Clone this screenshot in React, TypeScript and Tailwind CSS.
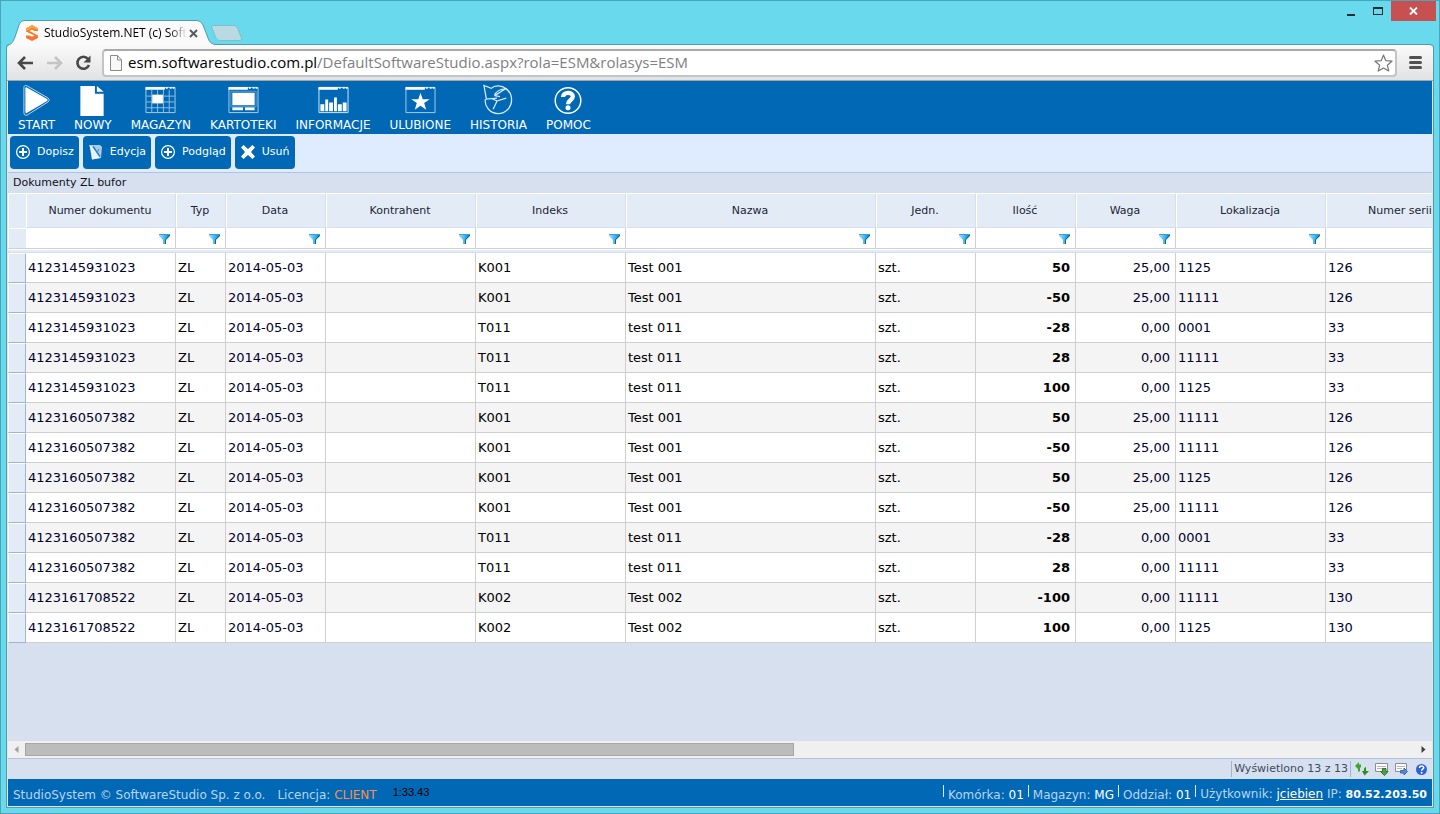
import type { ReactNode } from "react";

const columns = [
  { key: "numer", label: "Numer dokumentu", width: "w-[150px]" },
  { key: "typ", label: "Typ", width: "w-[50px]" },
  { key: "data", label: "Data", width: "w-[100px]" },
  { key: "kontrahent", label: "Kontrahent", width: "w-[150px]" },
  { key: "indeks", label: "Indeks", width: "w-[150px]" },
  { key: "nazwa", label: "Nazwa", width: "w-[250px]" },
  { key: "jedn", label: "Jedn.", width: "w-[100px]" },
  { key: "ilosc", label: "Ilość", width: "w-[100px]" },
  { key: "waga", label: "Waga", width: "w-[100px]" },
  { key: "lokalizacja", label: "Lokalizacja", width: "w-[150px]" },
  { key: "seria", label: "Numer serii", width: "w-[150px]" },
];

// numer, indeks, nazwa, ilosc, waga, lokalizacja, seria
const documents = [
  ["4123145931023", "K001", "Test 001", "50", "25,00", "1125", "126"],
  ["4123145931023", "K001", "Test 001", "-50", "25,00", "11111", "126"],
  ["4123145931023", "T011", "test 011", "-28", "0,00", "0001", "33"],
  ["4123145931023", "T011", "test 011", "28", "0,00", "11111", "33"],
  ["4123145931023", "T011", "test 011", "100", "0,00", "1125", "33"],
  ["4123160507382", "K001", "Test 001", "50", "25,00", "11111", "126"],
  ["4123160507382", "K001", "Test 001", "-50", "25,00", "11111", "126"],
  ["4123160507382", "K001", "Test 001", "50", "25,00", "1125", "126"],
  ["4123160507382", "K001", "Test 001", "-50", "25,00", "11111", "126"],
  ["4123160507382", "T011", "test 011", "-28", "0,00", "0001", "33"],
  ["4123160507382", "T011", "test 011", "28", "0,00", "11111", "33"],
  ["4123161708522", "K002", "Test 002", "-100", "0,00", "11111", "130"],
  ["4123161708522", "K002", "Test 002", "100", "0,00", "1125", "130"],
];

const menu: { label: string; icon: ReactNode }[] = [
  {
    label: "START",
    icon: (
      <>
        <path d="M3.500 4Q3.500 0.500 7 2L28.500 14.500Q31 16.500 28.500 18.500L7 32Q3.500 33 3.500 29.500Z" fill="none" stroke="#bcd8ee" />
        <path d="M5 4.500Q5 3 6.500 3.500L27.500 15.500Q28.500 16.500 27.500 17.500L6.500 30Q5 30.500 5 29Z" fill="#fff" />
      </>
    ),
  },
  {
    label: "NOWY",
    icon: (
      <>
        <path d="M4 2H19V10H28V33H4Z" fill="#fff" />
        <path d="M21 2L28 8H21Z" fill="#fff" />
      </>
    ),
  },
  {
    label: "MAGAZYN",
    icon: (
      <>
        <path d="M1.500 3.500H31.500V29.500H1.500Z" fill="none" stroke="#a9cdea" />
        <path d="M1 3H21V6H1ZM22 3H24V5H22ZM26 3H28V5H26ZM29 3H31V5H29Z" fill="#fff" />
        <path d="M7.500 6V29M13.500 6V29M19.500 6V29M25.500 6V29M2 12.500H31M2 18.500H31M2 24.500H31" stroke="#8fbfe4" />
        <path d="M8 11H19V20H8Z" fill="#fff" />
      </>
    ),
  },
  {
    label: "KARTOTEKI",
    icon: (
      <>
        <path d="M1.500 3.500H31.500V29.500H1.500Z" fill="none" stroke="#a9cdea" />
        <path d="M1 3H21V6H1ZM22 3H24V5H22ZM26 3H28V5H26ZM29 3H31V5H29ZM5 9H28V22H5ZM5 24H16V27H5ZM18 24H28V27H18Z" fill="#fff" />
        <path d="M3.500 7.500H29.500V23.500H3.500Z" fill="none" stroke="#5a9fd2" />
      </>
    ),
  },
  {
    label: "INFORMACJE",
    icon: (
      <>
        <path d="M1.500 3.500H31.500V29.500H1.500Z" fill="none" stroke="#d5e7f5" />
        <path d="M1 3H21V6H1ZM22 3H24V5H22ZM26 3H28V5H26ZM29 3H31V5H29Z" fill="#fff" />
        <path d="M3 21H7V28H3ZM8 16H11V28H8ZM12 19H16V28H12ZM17 14H20V28H17ZM21 21H25V28H21ZM26 19H30V28H26Z" fill="#fff" />
      </>
    ),
  },
  {
    label: "ULUBIONE",
    icon: (
      <>
        <path d="M1.500 3.500H31.500V29.500H1.500Z" fill="none" stroke="#a9cdea" />
        <path d="M1 3H21V6H1ZM22 3H24V5H22ZM26 3H28V5H26ZM29 3H31V5H29Z" fill="#fff" />
        <path d="M16.500 9L18.800 15.600H26L20.300 19.700 22.400 26.500 16.500 22.400 10.600 26.500 12.700 19.700 7 15.600H14.200Z" fill="#fff" />
      </>
    ),
  },
  {
    label: "HISTORIA",
    icon: (
      <g fill="none" stroke="#d9eaf7" strokeWidth="1.300">
        <path d="M3 15.500C1.500 23 8 30.500 16 30.500 24 30.500 30 24 30 16.500 30 11 27 6.500 23.500 4.500" />
        <path d="M12.500 12C13.500 8 18 5 24.500 5 19 0.500 12 1.500 9 4.500L1.500 1.500 4 15.500 15 14.500" />
        <path d="M12.500 12L23 5.500M12.500 12L18 13M11 26L15 17.500 24.500 14.500M9.500 15L15 17.500" />
      </g>
    ),
  },
  {
    label: "POMOC",
    icon: (
      <>
        <circle cx="16" cy="17" r="13.200" fill="none" stroke="#fff" strokeWidth="1.500" />
        <path d="M10.800 13.500C10.800 7.800 21 7.800 21 13 21 16.500 16 16.500 16 20.800" fill="none" stroke="#fff" strokeWidth="4.400" />
        <circle cx="16" cy="24.500" r="2.600" fill="#fff" />
      </>
    ),
  },
];

const plusIcon = (
  <>
    <circle cx="8" cy="8" r="6.400" fill="none" stroke="#fff" strokeWidth="1.200" />
    <path d="M8 4V12M4 8H12" stroke="#fff" strokeWidth="2" />
  </>
);

const actions: { label: string; icon: ReactNode }[] = [
  { label: "Dopisz", icon: plusIcon },
  {
    label: "Edycja",
    icon: (
      <>
        <path d="M2 1H12L14 3 13 14 4 15.500 2 5Z" fill="#a9cce8" />
        <path d="M1 1L5 3 12 14 4 15.500 3 6Z" fill="#e9f3fb" />
        <path d="M5 2.500L12 12.500" fill="none" stroke="#2a7fc0" strokeWidth="1.400" />
        <path d="M11 5L9 9" fill="none" stroke="#3d8bc8" />
      </>
    ),
  },
  { label: "Podgląd", icon: plusIcon },
  {
    label: "Usuń",
    icon: <path d="M1 3.500L3.500 1 8 5 12.500 1 15 3.500 11 8 15 12.500 12.500 15 8 11 3.500 15 1 12.500 5 8Z" fill="#fff" />,
  },
];

function Funnel() {
  return (
    <svg width="11" height="11" viewBox="0 0 11 11">
      <defs>
        <linearGradient id="funnel" x1="0" x2="1">
          <stop offset="0" stopColor="#a6e0fb" />
          <stop offset="0.600" stopColor="#35aee6" />
          <stop offset="1" stopColor="#0878ae" />
        </linearGradient>
      </defs>
      <path d="M0 0H11V2L7 6V10H4V6L0 2Z" fill="url(#funnel)" />
      <path d="M0 0.500H11" stroke="#3d9fd3" />
      <path d="M10.500 1.500L6.500 5.500V10" fill="none" stroke="#08699b" />
    </svg>
  );
}

function TitleBar() {
  return (
    <div className="flex h-[43px] shrink-0 items-start justify-between pr-[3px]">
      <div className="flex pt-[19px]">
        <div className="relative z-10 flex h-[26px] w-[203px] items-center pl-[17px]">
          <svg className="absolute -left-px top-0" width="209" height="26" viewBox="0 0 209 26">
            <path d="M0 26C5 24 6 22 8 17L12 5Q13.500 0.500 18 0.500H190Q194 0.500 196 5L201 18Q203 24.500 209 24.500V26Z" fill="#fafafa" />
            <path d="M0 25.500C5 24 6 22 8 17L12 5Q13.500 0.500 18 0.500H190Q194 0.500 196 5L201 18Q203 24.500 209 24.500" fill="none" stroke="#4f9cab" />
          </svg>
          <svg className="relative shrink-0" width="14" height="16" viewBox="0 0 14 16">
            <path d="M7 0L13 3.500V6H9.500L7 4.500 4.500 6 13 10.500V13L7 16 1 13V10.500H4.500L7 11.800 9.500 10.500 1 6.500V3.500Z" fill="#f5762f" />
            <path d="M7 0L13 3.500V5L7 3 3 5.500 1 6V3.500Z" fill="#fba33c" />
          </svg>
          <span className="relative ml-[5px] whitespace-nowrap font-['Open_Sans',sans-serif] text-xs text-black [mask-image:linear-gradient(to_right,black_88%,transparent)]">
            StudioSystem.NET (c) Soft
          </span>
          <button aria-label="Zamknij kartę" className="relative ml-0.5">
            <svg width="9" height="9" viewBox="0 0 9 9">
              <path d="M1 1L8 8M8 1L1 8" stroke="#5a5a5a" strokeWidth="2" />
            </svg>
          </button>
        </div>
        <button aria-label="Nowa karta" className="self-start pt-[5px]">
          <svg width="32" height="16" viewBox="0 0 32 16">
            <path d="M0.500 2Q0 0.500 2 0.500H23Q25.500 0.500 26.500 3L30.500 13Q31 15.500 29 15.500H9Q6 15.500 5 13Z" fill="#b9d9e3" stroke="#7fbfcd" />
          </svg>
        </button>
      </div>
      <div className="flex h-5 items-center">
        <button aria-label="Minimalizuj" className="flex h-5 w-7 items-center justify-center pt-2">
          <span className="h-0.5 w-2 bg-[#2b2b2b]" />
        </button>
        <button aria-label="Maksymalizuj" className="flex h-5 w-[26px] items-center justify-center">
          <span className="h-2 w-2.5 border border-t-2 border-[#2b2b2b]" />
        </button>
        <button aria-label="Zamknij" className="flex h-5 w-[45px] items-center justify-center bg-[#c75050]">
          <svg width="9" height="8" viewBox="0 0 9 8">
            <path d="M1 0.500L8 7.500M8 0.500L1 7.500" stroke="#fff" strokeWidth="1.800" />
          </svg>
        </button>
      </div>
    </div>
  );
}

function AddressBar() {
  return (
    <div className="flex h-[37px] shrink-0 items-center gap-3 rounded-t border-b border-t border-b-[#a5a5a5] border-t-[#4f9cab] bg-linear-to-b from-[#fafafa] to-[#e2e2e2] pl-2.5 pr-[11px]">
      <button aria-label="Wstecz">
        <svg width="17" height="14" viewBox="0 0 17 14">
          <path d="M8 1L2 7 8 13M2 7H16" fill="none" stroke="#484848" strokeWidth="2.600" />
        </svg>
      </button>
      <button aria-label="Dalej">
        <svg width="17" height="14" viewBox="0 0 17 14">
          <path d="M9 1L15 7 9 13M15 7H1" fill="none" stroke="#c4c4c4" strokeWidth="2.600" />
        </svg>
      </button>
      <button aria-label="Odśwież">
        <svg width="17" height="16" viewBox="0 0 17 16">
          <path d="M13 3.800A6 6 0 1 0 14 10" fill="none" stroke="#484848" strokeWidth="2.600" />
          <path d="M15.500 0.500V7.500H8.500Z" fill="#484848" />
        </svg>
      </button>
      <div className="-ml-0.5 flex h-7 min-w-0 flex-1 items-center rounded-sm border-2 border-[#c4c4c4] border-t-[#a9a9a9] bg-white pl-1.5 pr-0.5">
        <svg className="shrink-0" width="12" height="16" viewBox="0 0 12 16">
          <path d="M0.500 0.500H7.500L11.500 5V15.500H0.500Z" fill="#f8f8f8" stroke="#8b8b8b" />
          <path d="M7.500 0.500V5H11.500" fill="none" stroke="#8b8b8b" />
        </svg>
        <a
          href="#adres"
          className="ml-1.5 flex-1 truncate pb-0.5 font-['Open_Sans',sans-serif] text-[15px] leading-5 text-[#808080]"
        >
          <span className="text-black">esm.softwarestudio.com.pl</span>
          /DefaultSoftwareStudio.aspx?rola=ESM&amp;rolasys=ESM
        </a>
        <button aria-label="Dodaj do zakładek">
          <svg width="19" height="18" viewBox="0 0 19 18">
            <path d="M9.500 1L11.800 6.700 18 7.200 13.300 11.200 14.800 17 9.500 13.900 4.200 17 5.700 11.200 1 7.200 7.200 6.700Z" fill="#fff" stroke="#777" strokeWidth="1.200" strokeLinejoin="round" />
          </svg>
        </button>
      </div>
      <button aria-label="Menu" className="flex flex-col gap-0.5">
        <span className="h-[3px] w-[13px] rounded-sm bg-[#515151]" />
        <span className="h-[3px] w-[13px] rounded-sm bg-[#515151]" />
        <span className="h-[3px] w-[13px] rounded-sm bg-[#515151]" />
      </button>
    </div>
  );
}

function DocumentsTable() {
  const cell = "h-[30px] border-b border-r border-[#cfcfcf] px-0.5";
  return (
    <table className="w-[1468px] table-fixed border-separate border-spacing-0">
      <thead>
        <tr>
          <th className="h-[35px] w-[18px] border-l border-t border-white bg-[#e3ebf6]" />
          {columns.map((column) => (
            <th
              key={column.key}
              scope="col"
              className={`${column.width} border-b border-l border-r border-t border-white border-b-[#d5dfed] border-r-[#d5dfed] bg-[#e3ebf6] pr-0.5 pt-0.5 text-[11px] font-normal text-[#201f35]`}
            >
              {column.label}
            </th>
          ))}
        </tr>
        <tr>
          <td className="h-[21px] border-b border-l border-t border-white border-b-[#cfcfcf] bg-[#e3ebf6]" />
          {columns.map((column) => (
            <td key={column.key} className="border-b border-r border-[#cfcfcf] bg-white">
              <div className="flex h-5 items-center pr-[5px]">
                <input aria-label={`Filtr: ${column.label}`} className="h-[18px] w-full min-w-0 flex-1 px-0.5 outline-none" />
                <button aria-label={`Filtruj ${column.label}`} className="shrink-0 pt-0.5">
                  <Funnel />
                </button>
              </div>
            </td>
          ))}
        </tr>
        <tr>
          <td colSpan={12} className="h-1 border-b border-t border-b-[#d5dfed] border-t-white bg-[#e3ebf6]" />
        </tr>
      </thead>
      <tbody className="text-[13px] leading-4">
        {documents.map(([numer, indeks, nazwa, ilosc, waga, lokalizacja, seria], index) => (
          <tr key={index} className="bg-white text-black even:bg-[#f4f4f4]">
            <td className="border-b border-l border-r border-t border-b-[#9db5d3] border-l-white border-r-[#9db5d3] border-t-white bg-[#e3ebf6]" />
            <td className={`${cell} text-[#00002e]`}>{numer}</td>
            <td className={cell}>ZL</td>
            <td className={`${cell} text-[#00002e]`}>2014-05-03</td>
            <td className={cell} />
            <td className={cell}>{indeks}</td>
            <td className={cell}>{nazwa}</td>
            <td className={cell}>szt.</td>
            <td className={`${cell} pr-[5px] text-right font-bold`}>{ilosc}</td>
            <td className={`${cell} pr-[5px] text-right text-[#00002e]`}>{waga}</td>
            <td className={`${cell} text-[#00002e]`}>{lokalizacja}</td>
            <td className={`${cell} text-[#00002e]`}>{seria}</td>
          </tr>
        ))}
      </tbody>
    </table>
  );
}

function ScrollBar() {
  return (
    <div className="flex h-[18px] shrink-0 items-center border-b border-[#adc3e0] bg-[#f0f0f0]">
      <button aria-label="Przewiń w lewo" className="flex w-[17px] justify-center">
        <svg width="5" height="7" viewBox="0 0 5 7">
          <path d="M4.500 0V7L0.500 3.500Z" fill="#a0a0a0" />
        </svg>
      </button>
      <div className="flex-1">
        <div className="h-[13px] w-[55.3%] border border-[#a6a6a6] bg-[#bcbcbc]" />
      </div>
      <button aria-label="Przewiń w prawo" className="flex w-[17px] justify-center">
        <svg width="5" height="7" viewBox="0 0 5 7">
          <path d="M0.500 0V7L4.500 3.500Z" fill="#404040" />
        </svg>
      </button>
    </div>
  );
}

function StatusBar() {
  return (
    <div className="flex h-5 shrink-0 items-center justify-end gap-1.5 pr-1">
      <span className="-mr-0.5 border-l border-r border-[#9db5d3] px-0.5 text-[11px] leading-4 text-[#3c4a63]">
        Wyświetlono 13 z 13
      </span>
      <button aria-label="Odśwież listę">
        <svg width="14" height="14" viewBox="0 0 14 14">
          <path d="M0 4L4 0V2.500H6V5.500H5V9.500H3V5.500H4V8Z" fill="#3aa82a" />
          <path d="M14 9L9.500 13.500 7 9H9Q8.500 5.500 11 5V9Z" fill="#2f8a20" />
        </svg>
      </button>
      <button aria-label="Eksportuj">
        <svg width="14" height="14" viewBox="0 0 14 14">
          <path d="M0.500 1.500H12.500V9.500H0.500Z" fill="#fff" stroke="#8a8f96" />
          <path d="M2 4.500H11M2 6.500H8" stroke="#b3b6ba" />
          <path d="M7.500 6.500H11V9.500H13L9.500 13.500 5.500 9.500H7.500Z" fill="#4fa044" stroke="#2f7a28" />
        </svg>
      </button>
      <button aria-label="Wyślij">
        <svg width="14" height="14" viewBox="0 0 14 14">
          <path d="M0.500 1.500H11.500V9.500H0.500Z" fill="#fff" stroke="#8a8f96" />
          <path d="M2 4.500H10M2 6.500H7" stroke="#b3b6ba" />
          <path d="M5.500 8.500H9V6L12.500 9.500 9 13V11H5.500Z" fill="#5b8ad8" stroke="#3d65ae" />
        </svg>
      </button>
      <button aria-label="Pomoc">
        <svg width="13" height="13" viewBox="0 0 13 13">
          <circle cx="6.500" cy="6.500" r="5.500" fill="#2a62d8" />
          <path d="M4.500 5C4.500 2.500 8.700 2.500 8.700 4.800 8.700 6.300 6.600 6 6.600 7.800" fill="none" stroke="#fff" strokeWidth="1.500" />
          <circle cx="6.600" cy="9.700" r="1" fill="#fff" />
        </svg>
      </button>
    </div>
  );
}

function Footer() {
  const separator = <span className="mb-1 h-3 w-px bg-[#dcebf8]" />;
  return (
    <footer className="flex h-[27px] shrink-0 items-center justify-between bg-[#0068b5] pl-[5px] pr-[5px] text-xs text-[#b9d4ee]">
      <div className="flex items-center">
        <span className="pt-1">StudioSystem © SoftwareStudio Sp. z o.o.</span>
        <span className="ml-3 pt-1">
          Licencja: <span className="text-[#ff8c4a]">CLIENT</span>
        </span>
        <span className="ml-4 font-['Liberation_Sans',sans-serif] text-[11px] text-black">1:33.43</span>
      </div>
      <div className="flex items-center gap-1">
        {separator}
        <span className="pt-1">Komórka: <span className="text-white">01</span></span>
        {separator}
        <span className="pt-1">Magazyn: <span className="text-white">MG</span></span>
        {separator}
        <span className="pt-1">Oddział: <span className="text-white">01</span></span>
        {separator}
        <span className="pt-1">
          Użytkownik: <a href="#konto" className="text-white underline">jciebien</a> IP:{" "}
          <b className="text-[11px] text-white">80.52.203.50</b>
        </span>
      </div>
    </footer>
  );
}

export default function App() {
  return (
    <div className="flex h-screen flex-col overflow-hidden border border-[#4aa5b8] bg-[#69d9ee] pb-[5px] font-[Verdana,'DejaVu_Sans',sans-serif]">
      <div className="flex shrink-0 flex-col pl-[7px]">
        <TitleBar />
      </div>
      <div className="mx-[5px] flex min-h-0 flex-1 flex-col rounded-t border border-t-0 border-[#4f9cab]">
        <AddressBar />
        <div className="flex min-h-0 flex-1 flex-col border border-t-0 border-[#e4e4e4] bg-[#d7e0ef]">
          <nav className="flex h-[53px] shrink-0 gap-[19px] bg-[#0068b5] pl-2.5 pt-[3px]">
            {menu.map((item) => (
              <button key={item.label} className="flex flex-col items-center text-xs leading-[18px] text-white">
                <svg width="33" height="33" viewBox="0 0 33 33">{item.icon}</svg>
                {item.label}
              </button>
            ))}
          </nav>
          <div className="flex h-[39px] shrink-0 gap-1 border-b border-[#adc3e0] bg-[#dfebfe] pl-0.5 pt-0.5">
            {actions.map((action) => (
              <button
                key={action.label}
                className="flex h-[33px] items-center gap-1.5 rounded bg-[#0068b5] pl-[5px] pr-[5px] text-[11px] text-white"
              >
                <svg className="mb-0.5" width="16" height="16" viewBox="0 0 16 16">{action.icon}</svg>
                <span>{action.label}</span>
              </button>
            ))}
          </div>
          <h1 className="h-5 shrink-0 pl-[5px] text-[11px] leading-5 text-[#101020]">Dokumenty ZL bufor</h1>
          <div className="min-h-0 flex-1 overflow-hidden">
            <DocumentsTable />
          </div>
          <ScrollBar />
          <StatusBar />
          <Footer />
        </div>
      </div>
    </div>
  );
}
